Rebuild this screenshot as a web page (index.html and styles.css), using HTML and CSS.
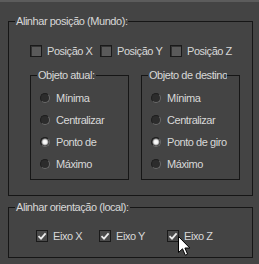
FILE: index.html
```html
<!DOCTYPE html>
<html lang="pt">
<head>
  <meta charset="UTF-8" />
  <meta name="viewport" content="width=device-width, initial-scale=1.0" />
  <title>Alinhar</title>
  <link rel="stylesheet" href="styles.css">
</head>
<body>
  <div class="topbar"></div>

  <div class="panel">
    <fieldset class="group">
      <legend>Alinhar posição (Mundo):</legend>
      <div class="group-body main-body">
        <div class="axis-row">
          <label class="opt pos"><span class="box"></span>Posição X</label>
          <label class="opt pos"><span class="box"></span>Posição Y</label>
          <label class="opt pos"><span class="box"></span>Posição Z</label>
        </div>

        <div class="columns">
          <fieldset class="group sub-group">
            <legend>Objeto atual:</legend>
            <div class="radio-list">
              <label class="opt"><span class="radio"></span>Mínima</label>
              <label class="opt"><span class="radio"></span>Centralizar</label>
              <label class="opt"><span class="radio on"></span>Ponto de</label>
              <label class="opt"><span class="radio"></span>Máximo</label>
            </div>
          </fieldset>
          <fieldset class="group sub-group">
            <legend class="clipped">Objeto de destino:</legend>
            <div class="radio-list">
              <label class="opt"><span class="radio"></span>Mínima</label>
              <label class="opt"><span class="radio"></span>Centralizar</label>
              <label class="opt"><span class="radio on"></span>Ponto de giro</label>
              <label class="opt"><span class="radio"></span>Máximo</label>
            </div>
          </fieldset>
        </div>
      </div>
    </fieldset>

    <fieldset class="group orient-group">
      <legend>Alinhar orientação (local):</legend>
      <div class="group-body orient-body">
        <div class="axis-row">
          <label class="opt ax-x"><span class="box checked"><svg viewBox="0 0 12 12" width="12" height="12"><path d="M2.5 6.2 L5 8.6 L9.6 3.4" fill="none" stroke="#ececec" stroke-width="1.8"/></svg></span>Eixo X</label>
          <label class="opt ax-y"><span class="box checked"><svg viewBox="0 0 12 12" width="12" height="12"><path d="M2.5 6.2 L5 8.6 L9.6 3.4" fill="none" stroke="#ececec" stroke-width="1.8"/></svg></span>Eixo Y</label>
          <label class="opt ax-z"><span class="box checked"><svg viewBox="0 0 12 12" width="12" height="12"><path d="M2.5 6.2 L5 8.6 L9.6 3.4" fill="none" stroke="#ececec" stroke-width="1.8"/></svg></span>Eixo Z</label>
        </div>
      </div>
    </fieldset>
  </div>

  <!-- mouse pointer over "Eixo Z" -->
  <svg class="pointer" viewBox="0 0 13 21" width="13" height="21">
    <path d="M0.5 0.5 L0.5 16.5 L4.5 12.8 L7.3 19.2 L9.6 18.2 L6.9 12 L11.8 12 Z" fill="#fff" stroke="#000" stroke-width="1"/>
  </svg>
</body>
</html>
```

FILE: styles.css
```css
body {
  margin: 0;
  width: 259px;
  height: 264px;
  background: #444444;
  color: #d8d8d8;
  font-family: "Liberation Sans", Arial, sans-serif;
  font-size: 11px;
  letter-spacing: -0.45px;
  position: relative;
  overflow: hidden;
}

.topbar {
  height: 2px;
  background: #5c5c5c;
}

.panel {
  padding: 12px 6px 0 8px;
}

.group {
  margin: 0;
  padding: 0;
  border: 1px solid #161616;
  min-width: 0;
}

.group legend {
  margin-left: 6px;
  padding: 0 1px;
  line-height: 14px;
  white-space: nowrap;
}

.main-body {
  padding: 17px 12px 15px 21px;
}

.opt {
  display: flex;
  align-items: center;
  white-space: nowrap;
}

.axis-row {
  display: flex;
  height: 12px;
}

.pos {
  width: 75px;
}

.box {
  display: block;
  width: 10px;
  height: 10px;
  margin-right: 5px;
  border: 1px solid #1a1a1a;
  background: #5a5a5a;
  box-shadow: inset 1px 1px 0 #333;
}

.box.checked {
  background: #4a4a4a;
  box-shadow: none;
}

.box svg {
  display: block;
  margin: -1px;
}

.columns {
  display: flex;
  gap: 12px;
  margin-top: 11px;
}

.sub-group {
  width: 99px;
  box-sizing: border-box;
}

/* title is wider than the box, the original cuts it off */
.group .clipped {
  width: 70px;
  overflow: hidden;
  padding-right: 8px;
}

.radio-list {
  display: flex;
  flex-direction: column;
  padding: 5px 0 4px 9px;
}

.radio-list .opt {
  height: 22px;
}

.radio {
  display: block;
  width: 8px;
  height: 8px;
  margin-right: 6px;
  border-radius: 50%;
  border: 1px solid;
  border-color: #1e1e1e #6a6a6a #6a6a6a #1e1e1e;
  background: #2c2c2c;
}

.radio.on {
  background: radial-gradient(circle, #ffffff 0, #f0f0f0 2px, #9a9a9a 3px, #2c2c2c 4px);
}

.orient-group {
  margin-top: 4px;
}

.orient-body {
  padding: 16px 0 15px 27px;
}

.ax-x {
  width: 63px;
}

.ax-y {
  width: 68px;
}

.pointer {
  position: absolute;
  left: 178px;
  top: 236px;
}
```
